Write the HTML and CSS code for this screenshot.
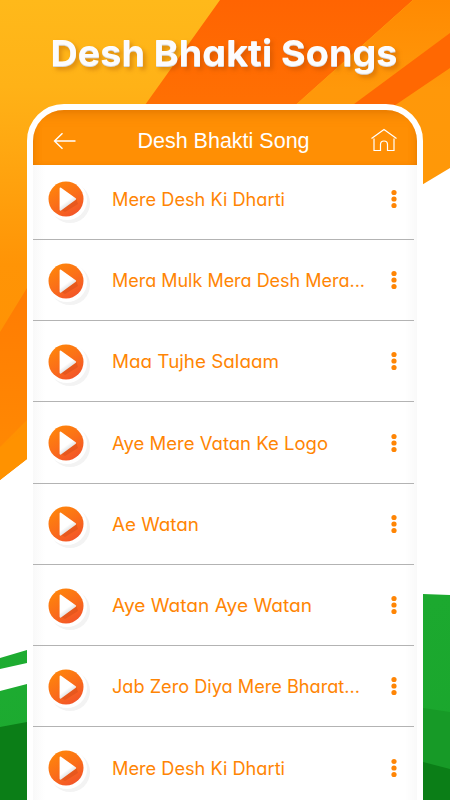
FILE: index.html
```
<!DOCTYPE html>
<html lang="en">
<head>
<meta charset="utf-8">
<title>Desh Bhakti Songs</title>
<link rel="stylesheet" href="styles.css">
</head>
<body>
<svg class="backdrop" viewBox="0 0 450 800" aria-hidden="true">
  <defs>
    <linearGradient id="saffron" x1="0" y1="0" x2="0" y2="1"><stop offset="0" stop-color="#ffb91a"/><stop offset=".18" stop-color="#ffb217"/><stop offset=".55" stop-color="#ff9406"/><stop offset="1" stop-color="#ff9000"/></linearGradient>
    <linearGradient id="band" x1="0" y1="0" x2="0" y2="1"><stop offset="0" stop-color="#ff6402"/><stop offset=".24" stop-color="#ff7003"/><stop offset=".7" stop-color="#ff7e03"/><stop offset="1" stop-color="#ff8803"/></linearGradient>
    <linearGradient id="right" x1="0" y1="0" x2="0" y2="1"><stop offset="0" stop-color="#ff8a02"/><stop offset=".45" stop-color="#ff980a"/><stop offset="1" stop-color="#ff9807"/></linearGradient>
    <linearGradient id="green" x1="0" y1="0" x2="1" y2="1"><stop offset="0" stop-color="#1ead32"/><stop offset="1" stop-color="#1aa52c"/></linearGradient>
  </defs>
  <path fill="url(#saffron)" d="M0 0H420V250L27 459 0 480Z"/>
  <path fill="url(#band)" d="M220 0H413L290 110 27 420 0 447V332L27 288 145 105Z"/>
  <path fill="#ff9200" d="M27 429 0 447V480L27 459Z"/>
  <path fill="url(#right)" d="M413 0H450V168L400 198V110H290Z"/>
  <path fill="#ff6802" d="M450 33V68L388 110H346Z"/>
  <path fill="url(#green)" d="M0 658 27 650V663L0 669ZM0 691 27 684V800H0ZM423 594 450 595V800H423Z"/>
  <path fill="#179a27" d="M423 708 450 712V800H423Z"/>
  <path fill="#0b7e17" d="M0 727 27 722V800H0ZM423 762 450 769V800H423Z"/>
  <symbol id="play" viewBox="0 0 46 46">
    <defs>
      <linearGradient id="disc" x1=".15" y1="0" x2=".75" y2="1"><stop offset="0" stop-color="#ff8709"/><stop offset=".5" stop-color="#fb7018"/><stop offset="1" stop-color="#f2532a"/></linearGradient>
      <linearGradient id="face" x1=".3" y1=".2" x2=".7" y2="1"><stop offset=".45" stop-color="#fff"/><stop offset="1" stop-color="#c4c4c4"/></linearGradient>
    </defs>
    <circle cx="24" cy="24" r="20" fill="#f3f3f3"/>
    <circle cx="21" cy="21" r="20" fill="#fff"/>
    <circle cx="20" cy="20" r="17.5" fill="url(#disc)"/>
    <path d="M15 31 30.500 20.500 32 25 19 33Z" fill="#c84419" opacity=".35"/>
    <path d="M14.500 9.400 29.200 20 14.500 30.800Z" fill="url(#face)" stroke="url(#face)" stroke-width="1.800" stroke-linejoin="round"/>
  </symbol>
  <symbol id="dots" viewBox="0 0 6 20">
    <circle cx="3" cy="3.500" r="2.600"/><circle cx="3" cy="10" r="2.600"/><circle cx="3" cy="16.500" r="2.600"/>
  </symbol>
</svg>
<h1 class="title"><svg viewBox="0 0 450 80"><text x="50.500" y="66" textLength="347" lengthAdjust="spacingAndGlyphs">Desh Bhakti Songs</text></svg></h1>
<main class="phone">
  <header class="bar">
    <svg class="back" viewBox="0 0 24 18"><path d="M9.500 1.200 1.500 9l8 7.800M1.500 9H22.500"/></svg>
    <h2 class="heading">Desh Bhakti Song</h2>
    <svg class="home" viewBox="0 0 28 24"><path d="M1.500 10.500 14 1.500 26.500 10.500M4 10.500V22.500H10.500V16.500A3.500 3.500 0 0 1 17.500 16.500V22.500H24V10.500"/></svg>
  </header>
  <ul class="list">
    <li class="row"><svg class="play"><use href="#play"/></svg><svg class="name"><text x="0" y="31" textLength="173" lengthAdjust="spacingAndGlyphs">Mere Desh Ki Dharti</text></svg><svg class="more"><use href="#dots"/></svg></li>
    <li class="row"><svg class="play"><use href="#play"/></svg><svg class="name"><text x="0" y="31" textLength="253" lengthAdjust="spacingAndGlyphs">Mera Mulk Mera Desh Mera...</text></svg><svg class="more"><use href="#dots"/></svg></li>
    <li class="row"><svg class="play"><use href="#play"/></svg><svg class="name"><text x="0" y="31" textLength="167" lengthAdjust="spacingAndGlyphs">Maa Tujhe Salaam</text></svg><svg class="more"><use href="#dots"/></svg></li>
    <li class="row"><svg class="play"><use href="#play"/></svg><svg class="name"><text x="0" y="31" textLength="216" lengthAdjust="spacingAndGlyphs">Aye Mere Vatan Ke Logo</text></svg><svg class="more"><use href="#dots"/></svg></li>
    <li class="row"><svg class="play"><use href="#play"/></svg><svg class="name"><text x="0" y="31" textLength="87" lengthAdjust="spacingAndGlyphs">Ae Watan</text></svg><svg class="more"><use href="#dots"/></svg></li>
    <li class="row"><svg class="play"><use href="#play"/></svg><svg class="name"><text x="0" y="31" textLength="200" lengthAdjust="spacingAndGlyphs">Aye Watan Aye Watan</text></svg><svg class="more"><use href="#dots"/></svg></li>
    <li class="row"><svg class="play"><use href="#play"/></svg><svg class="name"><text x="0" y="31" textLength="248" lengthAdjust="spacingAndGlyphs">Jab Zero Diya Mere Bharat...</text></svg><svg class="more"><use href="#dots"/></svg></li>
    <li class="row"><svg class="play"><use href="#play"/></svg><svg class="name"><text x="0" y="31" textLength="173" lengthAdjust="spacingAndGlyphs">Mere Desh Ki Dharti</text></svg><svg class="more"><use href="#dots"/></svg></li>
  </ul>
</main>
</body>
</html>
```
FILE: styles.css
```
* { box-sizing: border-box; }
body {
  margin: 0;
  width: 450px;
  height: 800px;
  position: relative;
  overflow: hidden;
  background: #fff;
  font-family: Inter, "Liberation Sans", sans-serif;
}
.backdrop {
  position: absolute;
  inset: 0;
  width: 450px;
  height: 800px;
  z-index: -1;
}
.title { margin: 0; height: 104.4px; }
.title svg {
  display: block;
  width: 450px;
  height: 80px;
  filter: drop-shadow(.8px 1px 0 #d6d8de) drop-shadow(3px 3px 2px rgba(150, 60, 0, .3));
}
.title text {
  font-size: 36px;
  font-weight: 700;
  fill: #fcfcfe;
  font-feature-settings: "cv11";
}
.phone {
  width: 396px;
  height: 720px;
  margin: 0 27px;
  border: 6px solid #fff;
  border-radius: 37px 37px 0 0;
  overflow: hidden;
  background: linear-gradient(90deg, #f9f9f9, #fff 12px, #fff 372px, #f9f9f9);
}
.bar {
  height: 55px;
  display: flex;
  align-items: center;
  justify-content: space-between;
  padding: 7px 19px 0 20px;
  background: #ff8f04;
  box-shadow: inset 0 8px 12px -4px rgba(190, 95, 0, .35), inset 5px 0 8px -5px rgba(190, 95, 0, .3), inset -5px 0 8px -5px rgba(190, 95, 0, .3);
}
.bar svg { fill: none; stroke: #fff; stroke-width: 1.4; }
.back { width: 24px; height: 18px; }
.home { width: 28px; height: 24px; margin-top: -3px; }
.bar .home { stroke-width: 1.2; }
.heading {
  margin: 0;
  font: 400 21.5px/26px "Liberation Sans", sans-serif;
  color: #fff;
}
.list { margin: 0; padding: 0; list-style: none; }
.row {
  height: 81.25px;
  width: 381px;
  padding: 0 17px 0 13px;
  display: flex;
  align-items: center;
  border-bottom: 1px solid #b3b3b3;
}
.row:first-child { height: 74.5px; padding-bottom: 6.75px; }
.play { width: 46px; height: 46px; margin-top: 7px; flex: none; }
.name { width: 270px; height: 48px; margin-left: 19.5px; flex: none; overflow: visible; }
.name text {
  font-size: 18px;
  fill: #ff8504;
  font-feature-settings: "cv11";
}
.more { width: 6px; height: 20px; margin-left: auto; fill: #ff8504; }
```
